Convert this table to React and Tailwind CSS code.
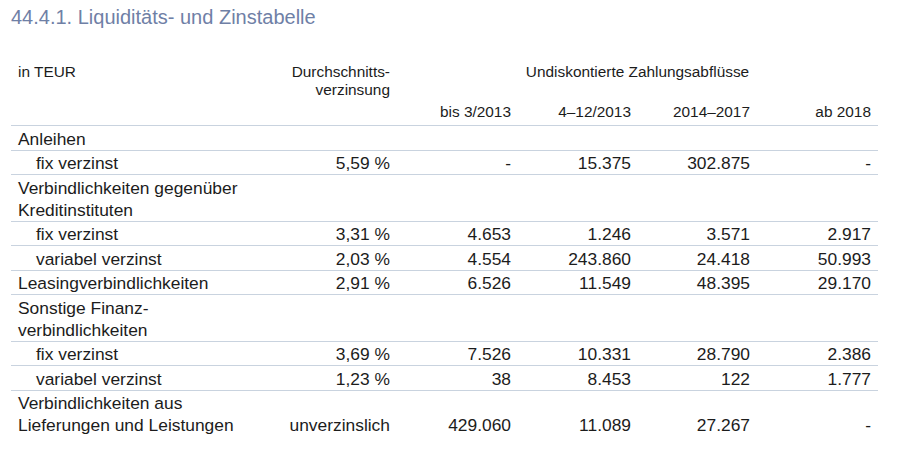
const cols = "grid grid-cols-[266px_120px_121px_120px_119px_121px]";

const rows = [
  { label: ["Anleihen"] },
  { label: ["fix verzinst"], sub: true, vals: ["5,59 %", "-", "15.375", "302.875", "-"] },
  { label: ["Verbindlichkeiten gegenüber", "Kreditinstituten"] },
  { label: ["fix verzinst"], sub: true, vals: ["3,31 %", "4.653", "1.246", "3.571", "2.917"] },
  { label: ["variabel verzinst"], sub: true, vals: ["2,03 %", "4.554", "243.860", "24.418", "50.993"] },
  { label: ["Leasingverbindlichkeiten"], vals: ["2,91 %", "6.526", "11.549", "48.395", "29.170"] },
  { label: ["Sonstige Finanz-", "verbindlichkeiten"] },
  { label: ["fix verzinst"], sub: true, vals: ["3,69 %", "7.526", "10.331", "28.790", "2.386"] },
  { label: ["variabel verzinst"], sub: true, vals: ["1,23 %", "38", "8.453", "122", "1.777"] },
  {
    label: ["Verbindlichkeiten aus", "Lieferungen und Leistungen"],
    vals: ["unverzinslich", "429.060", "11.089", "27.267", "-"],
    last: true,
  },
];

function Row({ row }) {
  return (
    <div
      className={`${cols} pt-[1.5px] ${row.last ? "" : "border-b border-[#c9d3df]"}`}
    >
      <div className={row.sub ? "pl-[25px] pr-[7px]" : "px-[7px]"}>
        {row.label.map((l) => (
          <div key={l}>{l}</div>
        ))}
      </div>
      {(row.vals || []).map((v, i) => (
        <div key={i} className="px-[7px] text-right flex items-end justify-end">
          {v}
        </div>
      ))}
    </div>
  );
}

export default function App() {
  return (
    <main
      className="bg-white w-[902px] h-[463px] px-[11px] text-[#1c1c1c]"
      style={{ fontFamily: '"Liberation Sans", Arial, sans-serif' }}
    >
      <h1 className="pt-[5px] text-[20px] leading-[24px] text-[#6f80a6]">
        44.4.1. Liquiditäts- und Zinstabelle
      </h1>

      <section className="mt-[34px] w-[867px]">
        <div className={`${cols} text-[15.4px] leading-[18px] pb-[4px] border-b border-[#c9d3df]`}>
          <div className="px-[7px]">in TEUR</div>
          <div className="px-[7px] text-right">
            Durchschnitts-
            <br />
            verzinsung
          </div>
          <div className="col-span-4 text-center">Undiskontierte Zahlungsabflüsse</div>
          <div className="col-start-3 px-[7px] text-right mt-[4px]">bis 3/2013</div>
          <div className="px-[7px] text-right mt-[4px]">4–12/2013</div>
          <div className="px-[7px] text-right mt-[4px]">2014–2017</div>
          <div className="px-[7px] text-right mt-[4px]">ab 2018</div>
        </div>

        <div className="text-[17.4px] leading-[22px]">
          {rows.map((r, i) => (
            <Row key={i} row={r} />
          ))}
        </div>
      </section>
    </main>
  );
}
